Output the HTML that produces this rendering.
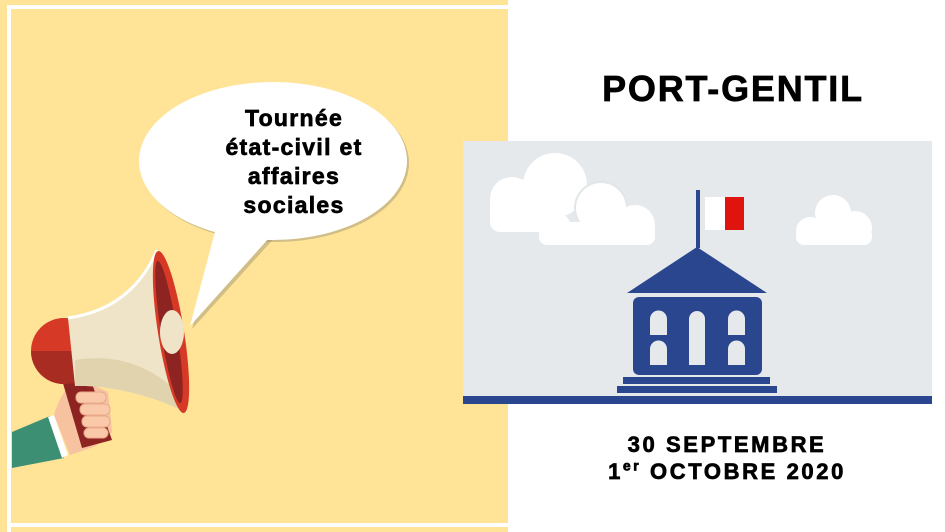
<!DOCTYPE html>
<html><head><meta charset="utf-8"><style>
html,body{margin:0;padding:0;}
body{width:945px;height:532px;position:relative;overflow:hidden;background:#fff;font-family:"Liberation Sans",Arial,sans-serif;}
.t{position:absolute;font-weight:bold;color:#000;text-align:center;-webkit-text-stroke:0.7px #000;}
</style></head><body>
<svg width="945" height="532" style="position:absolute;left:0;top:0">
<rect x="0" y="0" width="508" height="532" fill="#FFE397"/>
<rect x="7" y="5" width="501" height="4" fill="#fff"/>
<rect x="7" y="5" width="4" height="527" fill="#fff"/>
<rect x="7" y="523" width="501" height="4" fill="#fff"/>
<ellipse cx="273" cy="161" rx="134" ry="79" fill="#9a8f70" opacity="0.45" transform="translate(2,2)"/>
<path d="M218 232 L190 327 L276 232 Z" fill="#9a8f70" opacity="0.45" transform="translate(2,2)"/>
<ellipse cx="273" cy="161" rx="134" ry="79" fill="#fff"/>
<path d="M216 228 L190 326 L278 228 Z" fill="#fff"/>
<path d="M12 432 L50 416 L64 458 L12 468 Z" fill="#3d8f73"/>
<path d="M48 417 L54 415 L68 455 L62 458 Z" fill="#fff"/>
<path d="M54 415 C60 395 70 380 82 380 L108 392 L112 432 L96 446 L70 455 Z" fill="#f6c2a0"/>
<path d="M62 380 L90 378 L112 440 L82 448 Z" fill="#8e2421"/>
<circle cx="64" cy="351" r="33" fill="#d63a27"/>
<path d="M31 351 A33 33 0 0 0 80 380 L80 351 Z" fill="#a82c22"/>
<path d="M68 318 C110 312 140 290 157 250 L186 412 C150 395 110 385 75 386 Z" fill="#efe4c8"/>
<path d="M75 360 C120 352 160 370 184 400 L186 412 C150 395 110 385 75 386 Z" fill="#e0d3ae"/>
<path d="M68 318 C110 312 140 290 157 250" stroke="#fff" stroke-width="3" fill="none"/>
<ellipse cx="171" cy="332" rx="13" ry="82" fill="#d63a27" transform="rotate(-9 171 332)"/>
<ellipse cx="169" cy="332" rx="8" ry="72" fill="#8e2421" transform="rotate(-9 169 332)"/>
<ellipse cx="172" cy="332" rx="12" ry="22" fill="#efe4c8"/>
<g fill="#fac9a9" stroke="#e9a98a" stroke-width="1">
<rect x="76" y="392" width="30" height="11" rx="5"/>
<rect x="80" y="404" width="30" height="11" rx="5"/>
<rect x="82" y="416" width="28" height="11" rx="5"/>
<rect x="84" y="428" width="24" height="10" rx="5"/>
</g>
<rect x="463" y="141" width="469" height="263" fill="#e6e9ec"/>
<g fill="#fff">
<circle cx="512" cy="199" r="22"/><circle cx="555" cy="185" r="32"/><rect x="490" y="195" width="70" height="37" rx="10"/>
</g>
<circle cx="601" cy="208" r="27" fill="#e1e6e8"/>
<g fill="#fff">
<circle cx="601" cy="208" r="25"/><circle cx="555" cy="228" r="16"/><circle cx="635" cy="225" r="20"/><rect x="539" y="222" width="116" height="23" rx="8"/>
<circle cx="833" cy="213" r="18"/><circle cx="810" cy="231" r="14"/><circle cx="855" cy="228" r="17"/><rect x="796" y="228" width="76" height="17" rx="8"/>
</g>
<rect x="696" y="190" width="4" height="58" fill="#2a468e"/>
<rect x="705" y="197" width="20" height="33" fill="#fff"/>
<rect x="725" y="197" width="19" height="33" fill="#e0140e"/>
<path d="M697 247 L767 293 L627 293 Z" fill="#2a468e"/>
<rect x="633" y="297" width="129" height="78" rx="6" fill="#2a468e"/>
<g fill="#e6e9ec">
<path d="M650 335 V319 A8.5 8.5 0 0 1 667 319 V335 Z"/>
<path d="M650 365 V349 A8.5 8.5 0 0 1 667 349 V365 Z"/>
<path d="M689 365 V319 A8 8 0 0 1 705 319 V365 Z"/>
<path d="M728 335 V319 A8.5 8.5 0 0 1 745 319 V335 Z"/>
<path d="M728 365 V349 A8.5 8.5 0 0 1 745 349 V365 Z"/>
</g>
<rect x="623" y="377" width="147" height="7" fill="#2a468e"/>
<rect x="617" y="386" width="160" height="7" fill="#2a468e"/>
<rect x="463" y="396" width="469" height="8" fill="#2a468e"/>
</svg>
<div class="t" style="left:161px;top:104px;width:266px;font-size:23px;line-height:29px;letter-spacing:1.3px;">Tournée<br>état-civil et<br>affaires<br>sociales</div>
<div class="t" style="left:560px;top:67px;width:346px;font-size:36px;line-height:44px;letter-spacing:1.8px;">PORT-GENTIL</div>
<div class="t" style="left:560px;top:431px;width:334px;font-size:22px;line-height:27px;letter-spacing:2.6px;">30 SEPTEMBRE<br>1<sup style="font-size:14px;line-height:0;">er</sup> OCTOBRE 2020</div>
</body></html>
